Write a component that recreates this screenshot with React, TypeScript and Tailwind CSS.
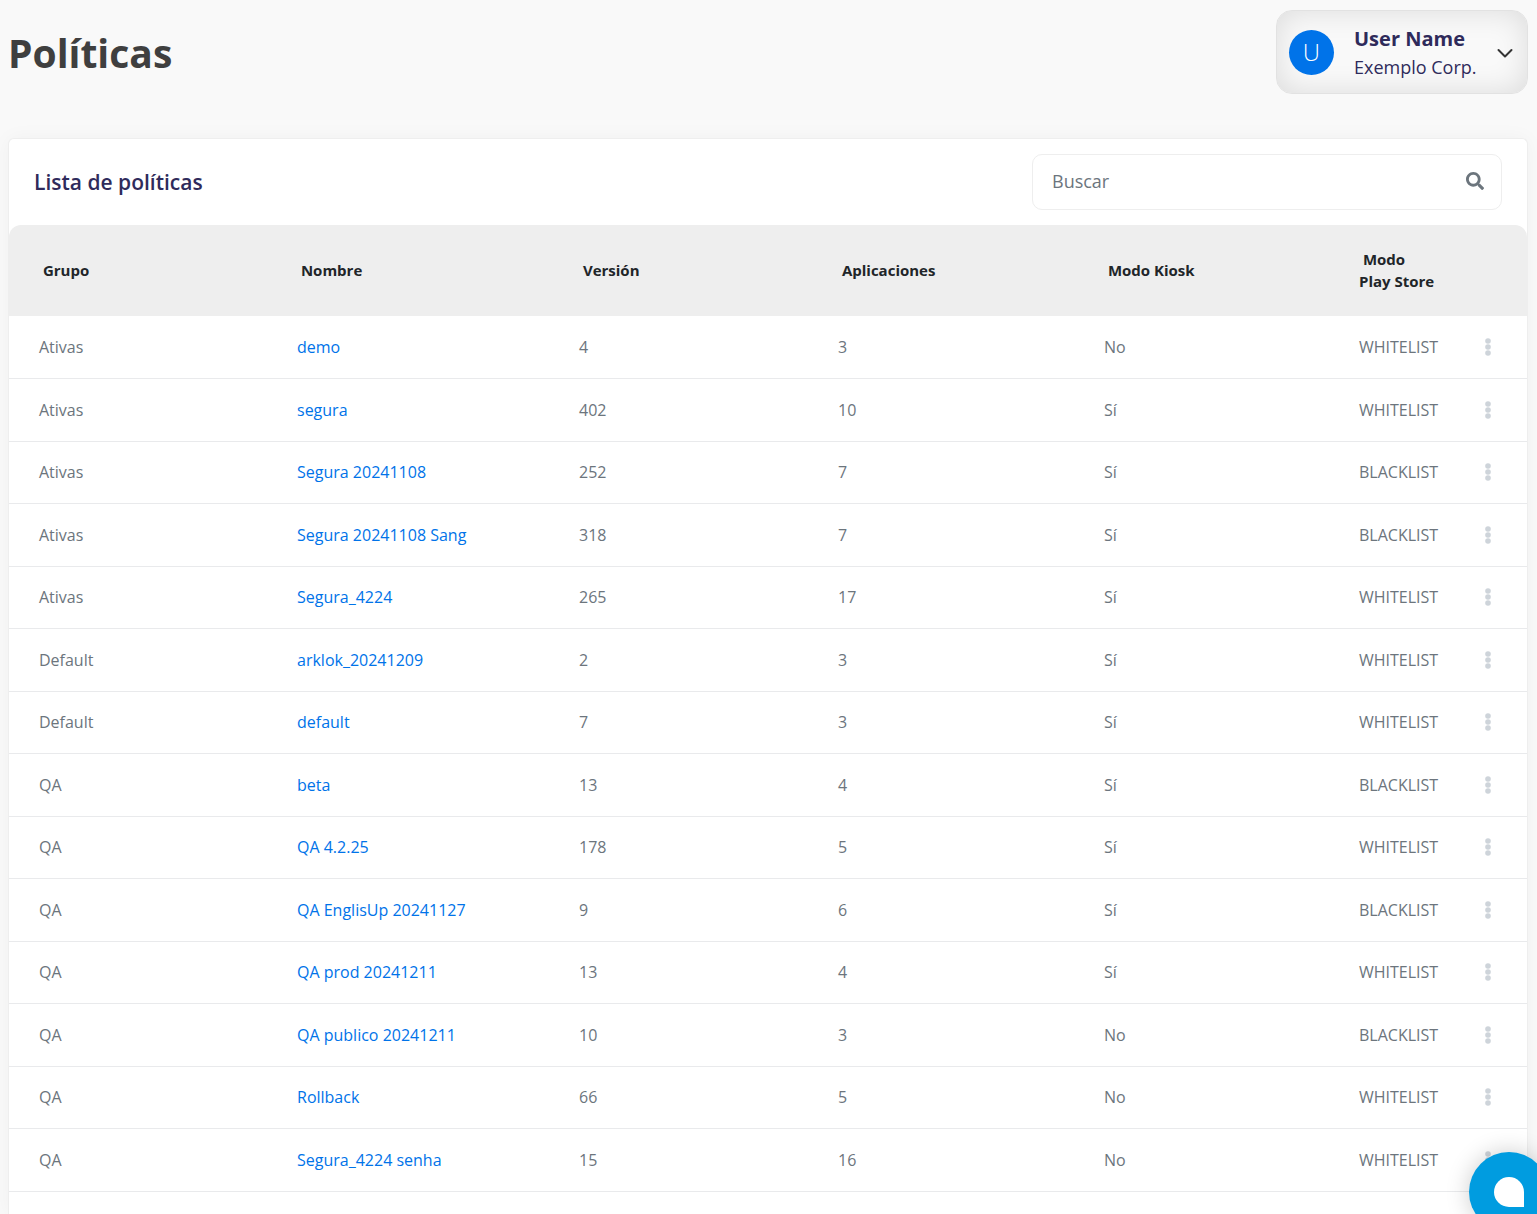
import { useState } from 'react'
import { FaSearch } from 'react-icons/fa'

type Policy = {
  group: string
  name: string
  version: number
  apps: number
  kiosk: boolean
  playStore: 'WHITELIST' | 'BLACKLIST'
}

const policies: Policy[] = [
  { group: 'Ativas', name: 'demo', version: 4, apps: 3, kiosk: false, playStore: 'WHITELIST' },
  { group: 'Ativas', name: 'segura', version: 402, apps: 10, kiosk: true, playStore: 'WHITELIST' },
  { group: 'Ativas', name: 'Segura 20241108', version: 252, apps: 7, kiosk: true, playStore: 'BLACKLIST' },
  { group: 'Ativas', name: 'Segura 20241108 Sang', version: 318, apps: 7, kiosk: true, playStore: 'BLACKLIST' },
  { group: 'Ativas', name: 'Segura_4224', version: 265, apps: 17, kiosk: true, playStore: 'WHITELIST' },
  { group: 'Default', name: 'arklok_20241209', version: 2, apps: 3, kiosk: true, playStore: 'WHITELIST' },
  { group: 'Default', name: 'default', version: 7, apps: 3, kiosk: true, playStore: 'WHITELIST' },
  { group: 'QA', name: 'beta', version: 13, apps: 4, kiosk: true, playStore: 'BLACKLIST' },
  { group: 'QA', name: 'QA 4.2.25', version: 178, apps: 5, kiosk: true, playStore: 'WHITELIST' },
  { group: 'QA', name: 'QA EnglisUp 20241127', version: 9, apps: 6, kiosk: true, playStore: 'BLACKLIST' },
  { group: 'QA', name: 'QA prod 20241211', version: 13, apps: 4, kiosk: true, playStore: 'WHITELIST' },
  { group: 'QA', name: 'QA publico 20241211', version: 10, apps: 3, kiosk: false, playStore: 'BLACKLIST' },
  { group: 'QA', name: 'Rollback', version: 66, apps: 5, kiosk: false, playStore: 'WHITELIST' },
  { group: 'QA', name: 'Segura_4224 senha', version: 15, apps: 16, kiosk: false, playStore: 'WHITELIST' },
]

function UserMenu() {
  return (
    <button
      type="button"
      className="flex h-[84px] w-[252px] items-center rounded-2xl border border-[#e2e2e2] pr-[13px] pl-3 text-left text-[#2f2b5b] shadow-[inset_0_0_30px_rgba(0,0,0,0.12)]"
    >
      <span className="flex size-[45px] shrink-0 items-center justify-center rounded-full bg-[#0073e9] text-2xl font-light text-white">
        U
      </span>
      <span className="ml-5 flex-1 pt-[2px] whitespace-nowrap">
        <span className="block text-xl leading-7 font-bold">User Name</span>
        <span className="block text-lg leading-7">Exemplo Corp.</span>
      </span>
      <svg className="h-5 w-[18px] text-[#343434]" viewBox="0 0 18 20" fill="none" stroke="currentColor" strokeWidth="2" aria-hidden="true">
        <path d="M2.5 8l6.5 6.5L15.500 8" strokeLinecap="round" strokeLinejoin="round" />
      </svg>
    </button>
  )
}

function PolicyRow({ policy }: { policy: Policy }) {
  return (
    <tr className="h-[62px] border-b border-[#e9eaec] even:h-[63px]">
      <td className="pl-[30px]">{policy.group}</td>
      <td className="pl-[30px]">
        <a href="#" className="text-[#0073e9]">{policy.name}</a>
      </td>
      <td className="pl-[30px]">{policy.version}</td>
      <td className="pl-[30px]">{policy.apps}</td>
      <td className="pl-[30px]">{policy.kiosk ? 'Sí' : 'No'}</td>
      <td className="pl-[30px]">{policy.playStore}</td>
      <td className="pr-[29px]">
        <button type="button" aria-label={`Opciones de ${policy.name}`} className="ml-auto flex h-6 w-5 items-center justify-center text-[#ced4da]">
          <svg width="6" height="18" viewBox="0 0 6 18" fill="currentColor" aria-hidden="true">
            <circle cx="3" cy="3" r="2.8" />
            <circle cx="3" cy="9" r="2.8" />
            <circle cx="3" cy="15" r="2.8" />
          </svg>
        </button>
      </td>
    </tr>
  )
}

export default function App() {
  const [search, setSearch] = useState('')
  const visible = policies.filter((p) => p.name.toLowerCase().includes(search.toLowerCase()))

  return (
    <div className="flex min-h-screen flex-col bg-[#f9f9f9] pr-[9px] pl-2 font-['Open_Sans','Noto_Sans',sans-serif]">
      <header className="flex items-start justify-between pt-[10px]">
        <h1 className="pt-[13px] text-[39px] leading-[60px] font-bold text-[#3f3f3f]">Políticas</h1>
        <UserMenu />
      </header>

      <main className="mt-11 flex-1 rounded-t-md border border-b-0 border-[#eeeeee] bg-white shadow-[0_0_20px_rgba(0,0,0,0.04)]">
        <div className="flex items-center justify-between px-[25px] py-[15px]">
          <h2 className="text-[21px] leading-8 font-semibold text-[#2f2b5b]">Lista de políticas</h2>
          <div className="flex h-14 w-[470px] items-center rounded-[10px] border border-[#eeeeee] pr-[17px] pb-[2px] pl-[19px]">
            <input
              type="text"
              aria-label="Buscar"
              value={search}
              onChange={(e) => setSearch(e.target.value)}
              placeholder="Buscar"
              className="min-w-0 flex-1 text-lg text-[#6c757d] outline-none placeholder:text-[#6c757d]"
            />
            <FaSearch className="size-[18px] text-[#6c757d]" aria-hidden="true" />
          </div>
        </div>

        <table className="w-full table-fixed border-collapse text-left text-base text-[#6c757d]">
          <colgroup>
            <col className="w-[258px]" />
            <col className="w-[282px]" />
            <col className="w-[259px]" />
            <col className="w-[266px]" />
            <col className="w-[255px]" />
            <col className="w-[128px]" />
            <col className="w-[70px]" />
          </colgroup>
          <thead>
            <tr className="h-[91px] text-[15px] leading-[22px] text-[#212529] *:bg-[#eeeeee] *:pb-[2px]">
              <th className="rounded-tl-xl pl-[30px]">&nbsp;Grupo</th>
              <th className="pl-[30px]">&nbsp;Nombre</th>
              <th className="pl-[30px]">&nbsp;Versión</th>
              <th className="pl-[30px]">&nbsp;Aplicaciones</th>
              <th className="pl-[30px]">&nbsp;Modo Kiosk</th>
              <th className="pl-[30px]">
                &nbsp;Modo
                <br />
                Play Store
              </th>
              <td className="rounded-tr-xl" />
            </tr>
          </thead>
          <tbody>
            {visible.map((p) => (
              <PolicyRow key={p.name} policy={p} />
            ))}
          </tbody>
        </table>
      </main>

      {/* Chat launcher floats over the bottom right corner */}
      <button
        type="button"
        aria-label="Abrir chat"
        className="fixed -right-3 -bottom-[18px] flex size-20 items-center justify-center rounded-full bg-[#009ce0] shadow-[0_0_24px_rgba(0,0,0,0.2)]"
      >
        <span className="size-[30px] rounded-full rounded-br-none bg-white" />
      </button>
    </div>
  )
}
